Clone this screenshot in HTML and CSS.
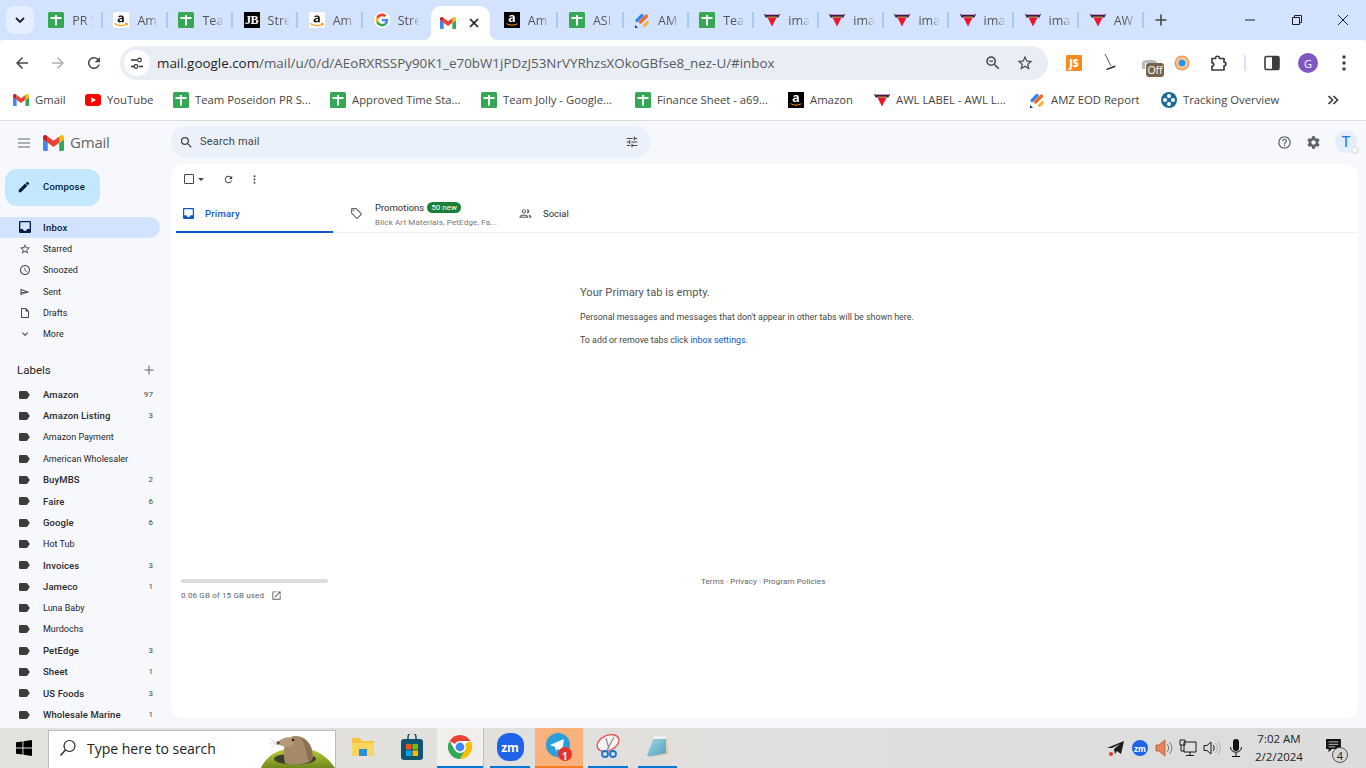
FILE: index.html
```html
<!DOCTYPE html>
<html lang="en">

<head>
    <meta charset="UTF-8">
    <meta name="viewport" content="width=device-width, initial-scale=1.0">
    <title>Inbox - Gmail</title>
    <link rel="stylesheet" href="styles.css">
</head>

<body>
    <!-- shared icons -->
    <svg class="sprite" width="0" height="0">
        <defs>
            <linearGradient id="mound" x1="0" y1="0" x2="0" y2="1">
                <stop offset="0" stop-color="#c3cc3a"/>
                <stop offset="1" stop-color="#6f8a1c"/>
            </linearGradient>
            <linearGradient id="note" x1="0" y1="0" x2="1" y2="1">
                <stop offset="0" stop-color="#a9dbe8"/>
                <stop offset="1" stop-color="#4f9fbd"/>
            </linearGradient>
        </defs>
        <symbol id="i-sheet" viewBox="0 0 16 16">
            <rect width="16" height="16" rx="1.5" fill="#34a853"/>
            <path d="M2.5 5H7V3h2v2h4.500v2H9v6.500H7V7H2.500z" fill="#fff"/>
        </symbol>
        <symbol id="i-amazon" viewBox="0 0 16 16">
            <rect width="16" height="16" rx="1.5" fill="#fff"/>
            <path d="M5.200 4.600C6 3 10.800 2.800 10.800 5.500v4.800H9.200L9 9.500c-1.300 1.400-4.400 1.200-4.400-1.100 0-2.300 2.800-2.500 4.400-2.500 0-1.600-2.200-1.500-2.800-.3zM9 7.100c-1 0-2.600.1-2.600 1.200 0 1.100 2.600 1 2.600-.3z" fill="#111"/>
            <path d="M1.500 11.500c3.500 2.700 9 2.800 12.300.5M12 11.200l2.200.4-.4 2" fill="none" stroke="#f90" stroke-width="1.100"/>
        </symbol>
        <symbol id="i-amazon-dark" viewBox="0 0 16 16">
            <rect width="16" height="16" fill="#000"/>
            <path d="M5.200 4.200C6 2.600 10.800 2.400 10.800 5.100v4.800H9.200L9 9.100c-1.300 1.400-4.400 1.200-4.400-1.100 0-2.300 2.800-2.500 4.400-2.500 0-1.600-2.200-1.500-2.800-.3zM9 6.700c-1 0-2.600.1-2.600 1.200 0 1.100 2.600 1 2.600-.3z" fill="#fff"/>
            <path d="M2.500 11.500c3 2 8 2.200 11 .2" fill="none" stroke="#f90" stroke-width="1"/>
        </symbol>
        <symbol id="i-google" viewBox="-6 -6 60 60">
            <circle cx="24" cy="24" r="30" fill="#fff"/>
            <path fill="#EA4335" d="M24 9.500c3.540 0 6.710 1.220 9.210 3.600l6.850-6.850C35.900 2.380 30.470 0 24 0 14.620 0 6.510 5.380 2.560 13.220l7.980 6.190C12.430 13.720 17.740 9.500 24 9.500z"/>
            <path fill="#4285F4" d="M46.980 24.550c0-1.570-.15-3.090-.38-4.550H24v9.020h12.940c-.58 2.960-2.260 5.480-4.780 7.180l7.730 6c4.510-4.180 7.090-10.360 7.090-17.650z"/>
            <path fill="#FBBC05" d="M10.530 28.590c-.48-1.450-.76-2.990-.76-4.590s.27-3.140.76-4.590l-7.980-6.190C.92 16.460 0 20.120 0 24c0 3.880.92 7.540 2.560 10.780l7.970-6.190z"/>
            <path fill="#34A853" d="M24 48c6.480 0 11.930-2.130 15.890-5.810l-7.730-6c-2.150 1.450-4.920 2.300-8.160 2.300-6.260 0-11.570-4.220-13.470-9.910l-7.980 6.190C6.510 42.620 14.620 48 24 48z"/>
        </symbol>
        <symbol id="i-gmail" viewBox="52 42 88 66">
            <path fill="#4285f4" d="M58 108h14V74L52 59v43c0 3.320 2.690 6 6 6"/>
            <path fill="#34a853" d="M120 108h14c3.320 0 6-2.690 6-6V59l-20 15"/>
            <path fill="#fbbc04" d="M120 48v26l20-15v-8c0-7.420-8.470-11.650-14.400-7.200"/>
            <path fill="#ea4335" d="M72 74V48l24 18 24-18v26L96 92"/>
            <path fill="#c5221f" d="M52 51v8l20 15V48l-5.600-4.200c-5.940-4.450-14.400-.22-14.400 7.200"/>
        </symbol>
        <symbol id="i-awl" viewBox="0 0 16 16">
            <path d="M0 2h16l-1.500 3.500h-13z" fill="#2b2140"/>
            <path d="M1 2.500h14" stroke="#d98fc0" stroke-width="1"/>
            <path d="M3.500 5.500h9L8 14.500z" fill="#f01428"/>
            <path d="M3 5h10" stroke="#e8b64a" stroke-width=".7"/>
        </symbol>
        <symbol id="i-amz" viewBox="0 0 16 16">
            <path d="M3 8.500 8 3.500" stroke="#2f86f0" stroke-width="3.200" stroke-linecap="round"/>
            <path d="M6.500 10 12.500 4" stroke="#f4691f" stroke-width="3.200" stroke-linecap="round"/>
            <path d="M10.500 13.500 13.500 10.500" stroke="#f9b233" stroke-width="3" stroke-linecap="round"/>
            <path d="M1 13l3 3H1z" fill="#1d2a5c"/>
        </symbol>
        <symbol id="i-label" viewBox="3 3 21 18"><path d="M17.630 5.840C17.270 5.330 16.670 5 16 5L5 5.010C3.900 5.010 3 5.900 3 7v10c0 1.100.9 1.990 2 1.990L16 19c.67 0 1.270-.33 1.630-.84L22 12l-4.370-6.160z"/></symbol>
        <symbol id="i-inbox" viewBox="3 3 18 18"><path d="M19 3H5c-1.100 0-2 .9-2 2v14c0 1.100.9 2 2 2h14c1.100 0 2-.9 2-2V5c0-1.100-.9-2-2-2zm0 12h-4c0 1.660-1.340 3-3 3s-3-1.340-3-3H5V5h14v10z"/></symbol>
    </svg>

    <div class="tabstrip">
        <button class="tab-search">
            <svg width="12" height="12" viewBox="0 0 12 12"><path d="M2 4l4 4 4-4" fill="none" stroke="#1f1f1f" stroke-width="1.800"/></svg>
        </button>
        <div class="tab"><svg class="fav"><use href="#i-sheet"/></svg><span class="tab-title">PR S</span></div>
        <div class="tab"><svg class="fav"><use href="#i-amazon"/></svg><span class="tab-title">Am</span></div>
        <div class="tab"><svg class="fav"><use href="#i-sheet"/></svg><span class="tab-title">Tea</span></div>
        <div class="tab"><span class="fav fav-jb">JB</span><span class="tab-title">Stre</span></div>
        <div class="tab"><svg class="fav"><use href="#i-amazon"/></svg><span class="tab-title">Am</span></div>
        <div class="tab no-sep"><svg class="fav"><use href="#i-google"/></svg><span class="tab-title">Stre</span></div>
        <div class="tab active">
            <svg class="fav"><use href="#i-gmail"/></svg>
            <svg class="tab-close" width="10" height="10" viewBox="0 0 10 10"><path d="M1 1l8 8M9 1l-8 8" stroke="#1f1f1f" stroke-width="1.700"/></svg>
        </div>
        <div class="tab"><svg class="fav"><use href="#i-amazon-dark"/></svg><span class="tab-title">Am</span></div>
        <div class="tab"><svg class="fav"><use href="#i-sheet"/></svg><span class="tab-title">ASI</span></div>
        <div class="tab"><svg class="fav"><use href="#i-amz"/></svg><span class="tab-title">AM</span></div>
        <div class="tab"><svg class="fav"><use href="#i-sheet"/></svg><span class="tab-title">Tea</span></div>
        <div class="tab"><svg class="fav"><use href="#i-awl"/></svg><span class="tab-title">ima</span></div>
        <div class="tab"><svg class="fav"><use href="#i-awl"/></svg><span class="tab-title">ima</span></div>
        <div class="tab"><svg class="fav"><use href="#i-awl"/></svg><span class="tab-title">ima</span></div>
        <div class="tab"><svg class="fav"><use href="#i-awl"/></svg><span class="tab-title">ima</span></div>
        <div class="tab"><svg class="fav"><use href="#i-awl"/></svg><span class="tab-title">ima</span></div>
        <div class="tab"><svg class="fav"><use href="#i-awl"/></svg><span class="tab-title">AW</span></div>
        <svg class="new-tab" width="12" height="12" viewBox="0 0 12 12"><path d="M6 .5v11M.5 6h11" stroke="#444" stroke-width="1.600"/></svg>
        <div class="window-controls">
            <span class="win-btn"><svg width="12" height="12" viewBox="0 0 12 12"><path d="M1 6h10" stroke="#1f1f1f" stroke-width="1"/></svg></span>
            <span class="win-btn"><svg width="12" height="12" viewBox="0 0 12 12"><path d="M1.500 3.500h7v7h-7zM3.500 3.500v-2h7v7h-2" fill="none" stroke="#1f1f1f" stroke-width="1"/></svg></span>
            <span class="win-btn"><svg width="12" height="12" viewBox="0 0 12 12"><path d="M1 1l10 10M11 1L1 11" stroke="#1f1f1f" stroke-width="1"/></svg></span>
        </div>
    </div>

    <div class="toolbar">
        <svg class="tool-icon" viewBox="0 0 24 24"><path d="M20 11H7.830l5.590-5.590L12 4l-8 8 8 8 1.410-1.410L7.830 13H20v-2z"/></svg>
        <svg class="tool-icon disabled" viewBox="0 0 24 24"><path d="M12 4l-1.410 1.410L16.170 11H4v2h12.170l-5.580 5.590L12 20l8-8z"/></svg>
        <svg class="tool-icon" viewBox="0 0 24 24"><path d="M17.650 6.350A7.958 7.958 0 0 0 12 4c-4.420 0-7.990 3.580-7.990 8s3.570 8 7.990 8c3.730 0 6.840-2.550 7.730-6h-2.080A5.990 5.990 0 0 1 12 18c-3.310 0-6-2.690-6-6s2.690-6 6-6c1.660 0 3.140.69 4.220 1.780L13 11h7V4l-2.350 2.350z"/></svg>
        <div class="omnibox">
            <span class="site-info">
                <svg width="14" height="14" viewBox="0 0 14 14"><path d="M1 4h6M1 10.500h3M9 10.500h4" stroke="#333" stroke-width="1.300"/><circle cx="9.500" cy="4" r="1.800" fill="none" stroke="#333" stroke-width="1.200"/><circle cx="6" cy="10.500" r="1.800" fill="none" stroke="#333" stroke-width="1.200"/></svg>
            </span>
            <span class="url"><b>mail.google.com</b>/mail/u/0/d/AEoRXRSSPy90K1_e70bW1jPDzJ53NrVYRhzsXOkoGBfse8_nez-U/#inbox</span>
            <svg class="omni-icon" viewBox="0 0 24 24"><path d="M15.500 14h-.79l-.28-.27A6.471 6.471 0 0 0 16 9.500 6.500 6.500 0 1 0 9.500 16c1.610 0 3.090-.59 4.230-1.570l.27.28v.79l5 4.990L20.490 19l-4.990-5zm-6 0C7.010 14 5 11.990 5 9.500S7.010 5 9.500 5 14 7.010 14 9.500 11.990 14 9.500 14z"/><path d="M7 8.700h5v1.600H7z"/></svg>
            <svg class="omni-icon" viewBox="0 0 24 24"><path d="M22 9.240l-7.190-.62L12 2 9.190 8.630 2 9.240l5.460 4.730L5.820 21 12 17.270 18.180 21l-1.630-7.030L22 9.240zM12 15.400l-3.760 2.270 1-4.280-3.320-2.880 4.380-.38L12 6.100l1.710 4.040 4.380.38-3.320 2.880 1 4.280L12 15.400z"/></svg>
        </div>
        <div class="extensions">
            <span class="ext ext-js">JS</span>
            <span class="ext"><svg width="20" height="20" viewBox="0 0 20 20"><path d="M5 1l6 12" stroke="#555" stroke-width="1"/><path d="M6 16l9-3.500.5 1.500-8.500 3z" fill="#222"/></svg></span>
            <span class="ext ext-off">
                <svg class="off-icon" width="16" height="12" viewBox="0 0 16 12"><path d="M0 3c2-3 13-3 15 0v1H3v6H0z" fill="#b9b9b9"/></svg>
                <span class="off-badge">Off</span>
            </span>
            <span class="ext"><svg width="18" height="18" viewBox="0 0 18 18"><circle cx="9" cy="9" r="7.500" fill="#ef9a5a"/><circle cx="9" cy="9" r="6" fill="#f6c79c"/><circle cx="9" cy="9" r="3.300" fill="#2196e8"/></svg></span>
            <span class="ext"><svg width="18" height="18" viewBox="0 0 18 18"><path d="M3 4.500h3.500c0-3 4-3 4 0H15v3.700c2.500 0 2.500 3.600 0 3.600V16H3v-4c2.200.5 2.600-3.600 0-3.200z" fill="none" stroke="#3c3c3c" stroke-width="1.700" stroke-linejoin="round"/></svg></span>
            <span class="tool-sep"></span>
            <span class="ext"><svg width="16" height="16" viewBox="0 0 16 16"><rect x="1" y="1.500" width="14" height="13" rx="1.500" fill="#fff" stroke="#3c3c3c" stroke-width="1.600"/><rect x="8" y="1.500" width="7" height="13" fill="#3c3c3c"/></svg></span>
            <span class="ext"><span class="profile">G</span></span>
            <span class="ext"><svg width="4" height="16" viewBox="0 0 4 16"><circle cx="2" cy="2" r="1.700" fill="#3c3c3c"/><circle cx="2" cy="8" r="1.700" fill="#3c3c3c"/><circle cx="2" cy="14" r="1.700" fill="#3c3c3c"/></svg></span>
        </div>
    </div>

    <div class="bookmarks">
        <a class="bm bm-1"><svg class="fav"><use href="#i-gmail"/></svg>Gmail</a>
        <a class="bm bm-2"><svg class="fav" viewBox="0 0 16 16"><rect y="2" width="16" height="12" rx="3" fill="#f00"/><path d="M6.300 5.300 11 8l-4.700 2.700z" fill="#fff"/></svg>YouTube</a>
        <a class="bm bm-3"><svg class="fav"><use href="#i-sheet"/></svg>Team Poseidon PR S...</a>
        <a class="bm bm-4"><svg class="fav"><use href="#i-sheet"/></svg>Approved Time Sta...</a>
        <a class="bm bm-5"><svg class="fav"><use href="#i-sheet"/></svg>Team Jolly - Google...</a>
        <a class="bm bm-6"><svg class="fav"><use href="#i-sheet"/></svg>Finance Sheet - a69...</a>
        <a class="bm bm-7"><svg class="fav"><use href="#i-amazon-dark"/></svg>Amazon</a>
        <a class="bm bm-8"><svg class="fav"><use href="#i-awl"/></svg>AWL LABEL - AWL L...</a>
        <a class="bm bm-9"><svg class="fav"><use href="#i-amz"/></svg>AMZ EOD Report</a>
        <a class="bm bm-10"><svg class="fav" viewBox="0 0 16 16"><circle cx="8" cy="8" r="8" fill="#1c6a96"/><circle cx="8" cy="4" r="2" fill="#fff"/><circle cx="8" cy="12" r="2" fill="#fff"/><circle cx="4" cy="8" r="2" fill="#fff"/><circle cx="12" cy="8" r="2" fill="#fff"/></svg>Tracking Overview</a>
        <svg class="bm-more" width="12" height="12" viewBox="0 0 12 12"><path d="M1.500 2l4 4-4 4M6.500 2l4 4-4 4" fill="none" stroke="#3c3c3c" stroke-width="1.700"/></svg>
    </div>

    <div class="gmail">
        <div class="gm-top">
            <div class="gm-brand">
                <svg class="burger" width="14" height="10" viewBox="0 0 14 10"><path d="M1 1h12M1 5h12M1 9h12" stroke="#5f6368" stroke-width="1.200"/></svg>
                <svg class="gm-logo"><use href="#i-gmail"/></svg>
                <span class="gm-word">Gmail</span>
            </div>
            <div class="gm-search">
                <svg class="gm-icon" viewBox="0 0 24 24"><path d="M15.500 14h-.79l-.28-.27A6.471 6.471 0 0 0 16 9.500 6.500 6.500 0 1 0 9.500 16c1.610 0 3.090-.59 4.230-1.570l.27.28v.79l5 4.990L20.490 19l-4.990-5zm-6 0C7.010 14 5 11.990 5 9.500S7.010 5 9.500 5 14 7.010 14 9.500 11.990 14 9.500 14z"/></svg>
                <span class="gm-search-text">Search mail</span>
                <svg class="gm-icon tune" viewBox="0 0 24 24"><path d="M3 17v2h6v-2H3zM3 5v2h10V5H3zm10 16v-2h8v-2h-8v-2h-2v6h2zM7 9v2H3v2h4v2h2V9H7zm14 4v-2H11v2h10zm-6-4h2V7h4V5h-4V3h-2v6z"/></svg>
            </div>
            <div class="gm-actions">
                <svg class="gm-action" viewBox="0 0 24 24"><path d="M11 18h2v-2h-2v2zm1-16C6.480 2 2 6.480 2 12s4.480 10 10 10 10-4.480 10-10S17.520 2 12 2zm0 18c-4.410 0-8-3.590-8-8s3.590-8 8-8 8 3.590 8 8-3.590 8-8 8zm0-14c-2.210 0-4 1.790-4 4h2c0-1.100.9-2 2-2s2 .9 2 2c0 2-3 1.750-3 5h2c0-2.250 3-2.500 3-5 0-2.210-1.790-4-4-4z"/></svg>
                <svg class="gm-action" viewBox="0 0 24 24"><path fill-rule="evenodd" d="M19.430 12.980c.04-.32.07-.64.07-.98 0-.34-.03-.66-.07-.98l2.110-1.650c.19-.15.24-.42.12-.64l-2-3.460c-.09-.16-.26-.25-.44-.25-.06 0-.12.01-.17.03l-2.490 1c-.52-.4-1.080-.73-1.690-.98l-.38-2.650C14.460 2.180 14.250 2 14 2h-4c-.25 0-.46.18-.49.42l-.38 2.650c-.61.25-1.170.59-1.690.98l-2.490-1c-.06-.02-.12-.03-.18-.03-.17 0-.34.09-.43.25l-2 3.460c-.13.22-.07.49.12.64l2.110 1.650c-.04.32-.07.65-.07.98 0 .33.03.66.07.98l-2.110 1.650c-.19.15-.24.42-.12.64l2 3.460c.09.16.26.25.44.25.06 0 .12-.01.17-.03l2.490-1c.52.4 1.080.73 1.690.98l.38 2.650c.03.24.24.42.49.42h4c.25 0 .46-.18.49-.42l.38-2.650c.61-.25 1.170-.59 1.690-.98l2.490 1c.06.02.12.03.18.03.17 0 .34-.09.43-.25l2-3.460c.12-.22.07-.49-.12-.64l-2.110-1.650zM12 15.500c-1.930 0-3.500-1.570-3.500-3.500s1.570-3.500 3.500-3.500 3.500 1.570 3.500 3.500-1.570 3.500-3.500 3.500z"/></svg>
                <span class="gm-avatar">T<span class="gm-key"></span></span>
            </div>
        </div>

        <div class="gm-body">
            <nav class="side">
                <button class="compose">
                    <svg class="compose-icon" viewBox="0 0 24 24"><path d="M3 17.250V21h3.750L17.810 9.940l-3.750-3.750L3 17.250zM20.710 7.040a1 1 0 0 0 0-1.410l-2.340-2.340a1 1 0 0 0-1.410 0l-1.830 1.830 3.750 3.750 1.830-1.830z"/></svg>
                    Compose
                </button>
                <a class="nav-row selected"><svg class="nav-icon dark"><use href="#i-inbox"/></svg>Inbox</a>
                <a class="nav-row"><svg class="nav-icon" viewBox="0 0 24 24"><path d="M22 9.240l-7.190-.62L12 2 9.190 8.630 2 9.240l5.460 4.730L5.820 21 12 17.270 18.180 21l-1.630-7.030L22 9.240zM12 15.400l-3.760 2.270 1-4.280-3.320-2.880 4.380-.38L12 6.100l1.710 4.040 4.380.38-3.320 2.880 1 4.280L12 15.400z"/></svg>Starred</a>
                <a class="nav-row"><svg class="nav-icon" viewBox="0 0 24 24"><path d="M11.990 2C6.470 2 2 6.480 2 12s4.470 10 9.990 10C17.520 22 22 17.520 22 12S17.520 2 11.990 2zM12 20c-4.420 0-8-3.580-8-8s3.580-8 8-8 8 3.580 8 8-3.580 8-8 8zm.5-13H11v6l5.250 3.150.75-1.230-4.500-2.670z"/></svg>Snoozed</a>
                <a class="nav-row"><svg class="nav-icon" viewBox="0 0 24 24"><path d="M3 5.500v13L21 12zm2 3l10 3.500H5zm0 7V14h10z" fill-rule="evenodd"/></svg>Sent</a>
                <a class="nav-row"><svg class="nav-icon" viewBox="0 0 24 24"><path d="M14 2H6c-1.100 0-2 .9-2 2v16c0 1.100.9 2 2 2h12c1.100 0 2-.9 2-2V8l-6-6zm4 18H6V4h7v5h5v11z"/></svg>Drafts</a>
                <a class="nav-row"><svg class="nav-icon" viewBox="0 0 24 24"><path d="M7.400 8.600 12 13.200l4.600-4.600L18 10l-6 6-6-6z"/></svg>More</a>

                <div class="labels-head">Labels<svg width="10" height="10" viewBox="0 0 10 10"><path d="M5 .5v9M.5 5h9" stroke="#5f6368" stroke-width="1"/></svg></div>

                <a class="nav-row unread"><svg class="nav-icon label"><use href="#i-label"/></svg>Amazon<span class="count">97</span></a>
                <a class="nav-row unread"><svg class="nav-icon label"><use href="#i-label"/></svg>Amazon Listing<span class="count">3</span></a>
                <a class="nav-row"><svg class="nav-icon label"><use href="#i-label"/></svg>Amazon Payment</a>
                <a class="nav-row"><svg class="nav-icon label"><use href="#i-label"/></svg>American Wholesaler</a>
                <a class="nav-row unread"><svg class="nav-icon label"><use href="#i-label"/></svg>BuyMBS<span class="count">2</span></a>
                <a class="nav-row unread"><svg class="nav-icon label"><use href="#i-label"/></svg>Faire<span class="count">6</span></a>
                <a class="nav-row unread"><svg class="nav-icon label"><use href="#i-label"/></svg>Google<span class="count">6</span></a>
                <a class="nav-row"><svg class="nav-icon label"><use href="#i-label"/></svg>Hot Tub</a>
                <a class="nav-row unread"><svg class="nav-icon label"><use href="#i-label"/></svg>Invoices<span class="count">3</span></a>
                <a class="nav-row unread"><svg class="nav-icon label"><use href="#i-label"/></svg>Jameco<span class="count">1</span></a>
                <a class="nav-row"><svg class="nav-icon label"><use href="#i-label"/></svg>Luna Baby</a>
                <a class="nav-row"><svg class="nav-icon label"><use href="#i-label"/></svg>Murdochs</a>
                <a class="nav-row unread"><svg class="nav-icon label"><use href="#i-label"/></svg>PetEdge<span class="count">3</span></a>
                <a class="nav-row unread"><svg class="nav-icon label"><use href="#i-label"/></svg>Sheet<span class="count">1</span></a>
                <a class="nav-row unread"><svg class="nav-icon label"><use href="#i-label"/></svg>US Foods<span class="count">3</span></a>
                <a class="nav-row unread"><svg class="nav-icon label"><use href="#i-label"/></svg>Wholesale Marine<span class="count">1</span></a>
            </nav>

            <main class="card">
                <div class="card-tools">
                    <span class="check"></span>
                    <span class="caret"></span>
                    <svg class="card-tool refresh" viewBox="0 0 24 24"><path d="M17.650 6.350A7.958 7.958 0 0 0 12 4c-4.420 0-7.990 3.580-7.990 8s3.570 8 7.990 8c3.730 0 6.840-2.550 7.730-6h-2.080A5.990 5.990 0 0 1 12 18c-3.310 0-6-2.690-6-6s2.690-6 6-6c1.660 0 3.140.69 4.220 1.780L13 11h7V4l-2.350 2.350z"/></svg>
                    <svg class="card-tool dots" viewBox="0 0 24 24"><circle cx="12" cy="5" r="2.200"/><circle cx="12" cy="12" r="2.200"/><circle cx="12" cy="19" r="2.200"/></svg>
                </div>
                <div class="mail-tabs">
                    <div class="mail-tab primary">
                        <svg class="mail-tab-icon"><use href="#i-inbox"/></svg>
                        <span>Primary</span>
                    </div>
                    <div class="mail-tab promo">
                        <svg class="mail-tab-icon grey" viewBox="0 0 24 24"><path d="M21.410 11.580l-9-9C12.050 2.220 11.550 2 11 2H4c-1.100 0-2 .9-2 2v7c0 .55.22 1.050.59 1.420l9 9c.36.36.86.58 1.410.58s1.050-.22 1.410-.59l7-7c.37-.36.59-.86.59-1.410s-.23-1.060-.59-1.420zM13 20l-9-9V4h7l9 9-7 7z"/><circle cx="6.500" cy="6.500" r="1.500"/></svg>
                        <div class="promo-text">
                            <div class="promo-title">Promotions<span class="promo-badge">50 new</span></div>
                            <div class="promo-sub">Blick Art Materials, PetEdge, Fa...</div>
                        </div>
                    </div>
                    <div class="mail-tab social">
                        <svg class="mail-tab-icon grey" viewBox="0 0 24 24"><path d="M9 12c2.210 0 4-1.790 4-4s-1.790-4-4-4-4 1.790-4 4 1.790 4 4 4zm0-6c1.100 0 2 .9 2 2s-.9 2-2 2-2-.9-2-2 .9-2 2-2zm0 8c-2.670 0-8 1.340-8 4v2h16v-2c0-2.660-5.330-4-8-4zm-6 4c.22-.72 3.310-2 6-2 2.700 0 5.800 1.290 6 2H3zM15.500 12c1.900 0 3.500-1.600 3.500-4s-1.600-4-3.500-4c-.5 0-.9.1-1.300.3.8 1 1.300 2.300 1.300 3.700s-.5 2.700-1.300 3.700c.4.200.8.300 1.300.3zm1.500 2.300c1.200.9 2 2 2 3.700v2h4v-2c0-2.300-3.500-3.400-6-3.700z"/></svg>
                        <span>Social</span>
                    </div>
                </div>

                <div class="empty">
                    <h2>Your Primary tab is empty.</h2>
                    <p>Personal messages and messages that don't appear in other tabs will be shown here.</p>
                    <p>To add or remove tabs click <a>inbox settings</a>.</p>
                </div>

                <div class="card-foot">
                    <div class="storage">
                        <div class="storage-bar"></div>
                        <div class="storage-text">0.06 GB of 15 GB used
                            <svg width="11" height="11" viewBox="0 0 24 24"><path d="M19 19H5V5h7V3H3v18h18v-9h-2zM14 3v2h3.590l-9.830 9.830 1.410 1.410L19 6.410V10h2V3z" fill="#5f6368"/></svg>
                        </div>
                    </div>
                    <div class="foot-links">Terms · Privacy · Program Policies</div>
                </div>
            </main>
        </div>
    </div>

    <footer class="taskbar">
        <span class="start">
            <svg width="16" height="16" viewBox="0 0 16 16"><path d="M0 2.300 6.500 1.400v6.200H0zM7.400 1.300 16 0v7.600H7.400zM0 8.400h6.500v6.200L0 13.700zM7.400 8.400H16V16l-8.600-1.200z" fill="#000"/></svg>
        </span>
        <div class="win-search">
            <svg width="18" height="18" viewBox="0 0 18 18"><circle cx="10.500" cy="7" r="5.500" fill="none" stroke="#222" stroke-width="1.200"/><path d="M6.500 11 1.500 16.500" stroke="#222" stroke-width="1.300"/></svg>
            <span>Type here to search</span>
            <svg class="doodle" width="74" height="38" viewBox="0 0 74 38">
                <path d="M0 38C6 25 18 18 37 18c18 0 29 8 37 20z" fill="url(#mound)"/>
                <ellipse cx="34" cy="29" rx="21" ry="5.500" fill="#39402a"/>
                <path d="M24 33C21 22 23 8 33 6c9-1 16 5 18 14 1 6 2 10-3 12-7 3-20 4-24 1z" fill="#a58a6a"/>
                <path d="M40 8c6 2 10 7 11 13 1 5 1 8-3 11-3-7-3-17-8-24z" fill="#8a7052"/>
                <path d="M16 13c3-4 10-7 16-5l1 7c-5 3-13 2-17-2z" fill="#b49a7c"/>
                <circle cx="17" cy="13" r="1.800" fill="#6a4a3a"/>
                <circle cx="32" cy="10" r="1.300" fill="#2a2018"/>
                <path d="M9 9l7 4M8 13h8M10 17l6-3" stroke="#cfcfcf" stroke-width=".7"/>
            </svg>
        </div>
        <div class="task-apps">
            <span class="app">
                <svg width="24" height="22" viewBox="0 0 24 22"><path d="M1 2h8l2 3h12v15H1z" fill="#f7c53d"/><path d="M1 7h22v13H1z" fill="#fbd65f"/><path d="M8 20v-7h8v7z" fill="#2a8fd8"/></svg>
            </span>
            <span class="app">
                <svg width="24" height="26" viewBox="0 0 24 26"><path d="M8 6V3a4 4 0 0 1 8 0v3" fill="none" stroke="#11526e" stroke-width="1.500"/><rect x="1" y="5" width="22" height="21" rx="3" fill="#11526e"/><rect x="6" y="10" width="5.500" height="5.500" fill="#f25022"/><rect x="12.500" y="10" width="5.500" height="5.500" fill="#7fba00"/><rect x="6" y="16.500" width="5.500" height="5.500" fill="#00a4ef"/><rect x="12.500" y="16.500" width="5.500" height="5.500" fill="#ffb900"/></svg>
            </span>
            <span class="app app-open app-chrome">
                <svg width="24" height="24" viewBox="-6 -6 60 60"><circle cx="24" cy="24" r="30" fill="#fff"/><path d="M24 -6a30 30 0 0 1 26 15H24a15 15 0 0 0-13 7.500L-2 9A30 30 0 0 1 24-6z" fill="#ea4335"/><path d="M50 9a30 30 0 0 1-26 45l13-22.500A15 15 0 0 0 37 16.500z" fill="#fbbc04"/><path d="M24 54A30 30 0 0 1-2 9l13 22.500A15 15 0 0 0 37 31.500z" fill="#34a853"/><circle cx="24" cy="24" r="11" fill="#4285f4"/></svg>
            </span>
            <span class="app-sep"></span>
            <span class="app app-open app-zoom"><span class="zm">zm</span></span>
            <span class="app app-open app-tg">
                <svg width="28" height="28" viewBox="0 0 28 28"><circle cx="13" cy="12" r="12" fill="#2a9fd9"/><path d="M5 12l14-6-2 13-4-3-2 2-1-4z" fill="#fff"/><circle cx="20" cy="21" r="7" fill="#e5322d"/></svg>
                <span class="tg-num">1</span>
            </span>
            <span class="app app-open app-snip">
                <svg width="26" height="26" viewBox="0 0 26 26"><ellipse cx="13" cy="9" rx="11.500" ry="7.500" transform="rotate(-25 13 9)" fill="#f4f4f4" stroke="#e25555" stroke-width="1.300"/><path d="M11 4l3 11M19 3l-7 13" stroke="#8c8c8c" stroke-width="1.200"/><circle cx="10" cy="20" r="3" fill="none" stroke="#1c75cf" stroke-width="1.800"/><circle cx="18" cy="20" r="3" fill="none" stroke="#1c75cf" stroke-width="1.800"/></svg>
            </span>
            <span class="app app-open app-note">
                <svg width="24" height="24" viewBox="0 0 24 24"><path d="M10 1h10l3 18-17 3z" fill="#d9cfa8"/><path d="M8 2h12l0 16-16 3.500c-1.500-.3-3-.5-3-1z" fill="url(#note)"/><path d="M8 1h12v3H6.500z" fill="#eef0ee"/></svg>
            </span>
        </div>
        <div class="tray">
            <span class="tray-slot"><svg width="18" height="16" viewBox="0 0 18 16"><path d="M0 8 17 1l-3 13-4-3-2 3-1-5 6-5-8 4z" fill="#1a1a1a"/><circle cx="4" cy="14" r="2" fill="#e5322d"/></svg></span>
            <span class="tray-slot"><span class="tray-zm">zm</span></span>
            <span class="tray-slot"><svg width="18" height="18" viewBox="0 0 18 18"><path d="M1 6h3l6-5v16l-6-5H1z" fill="#e8825a" stroke="#a0522d" stroke-width=".7"/><path d="M12 5c2 2 2 6 0 8M14.500 3c3 3 3 9 0 12" fill="none" stroke="#777" stroke-width="1"/></svg></span>
            <span class="tray-slot"><svg width="18" height="18" viewBox="0 0 18 18"><path d="M5 3h12v10H5zM1 1h5v5H1zM11 13v3M7 16.500h8M2 6v6h3" fill="none" stroke="#1a1a1a" stroke-width="1"/></svg></span>
            <span class="tray-slot"><svg width="18" height="16" viewBox="0 0 18 16"><path d="M1 5.500h3L8 2v12l-4-3.500H1z" fill="none" stroke="#1a1a1a" stroke-width="1"/><path d="M10 5c1.500 1.700 1.500 4.300 0 6" fill="none" stroke="#1a1a1a" stroke-width="1"/><path d="M12.500 3.500c2.500 2.500 2.500 6.500 0 9M15 2c3 3 3 9 0 12" fill="none" stroke="#aaa" stroke-width="1"/></svg></span>
            <span class="tray-slot"><svg width="14" height="18" viewBox="0 0 14 18"><rect x="4" y="0" width="6" height="12" rx="3" fill="#111"/><path d="M1.500 8c0 7 11 7 11 0M7 14v3M3 17.500h8" fill="none" stroke="#111" stroke-width="1"/></svg></span>
            <div class="clock"><span>7:02 AM</span><span>2/2/2024</span></div>
            <span class="notif">
                <svg width="17" height="14" viewBox="0 0 20 17"><path d="M1 0h18v12H8l-4 4v-4H1z" fill="#111"/><path d="M4 3.500h12M4 6.500h12M4 9.500h8" stroke="#e0e0e0" stroke-width="1"/></svg>
                <span class="notif-num">4</span>
            </span>
        </div>
    </footer>
</body>

</html>
```

FILE: styles.css
```css
:root {
    --tab-bg: #d3e3fd;
    --tab-sep: #a8c7fa;
    --gm-bg: #f6f8fc;
    --gm-text: #1f1f1f;
    --gm-grey: #5f6368;
    --blue: #0b57d0;
}

* {
    margin: 0;
    padding: 0;
    box-sizing: border-box;
}

html, body {
    height: 100%;
    overflow: hidden;
}

body {
    display: flex;
    flex-direction: column;
    font-family: "Open Sans", sans-serif;
    background-color: var(--gm-bg);
}

.sprite {
    position: absolute;
}

.fav {
    width: 16px;
    height: 16px;
    flex: none;
}

/* tab strip */
.tabstrip {
    height: 40px;
    flex: none;
    display: flex;
    align-items: center;
    padding-left: 6px;
    background-color: var(--tab-bg);
}

.tab-search {
    width: 28px;
    height: 28px;
    margin-right: 3.8px;
    flex: none;
    display: flex;
    align-items: center;
    justify-content: center;
    border: none;
    border-radius: 8px;
    background-color: #e4eefe;
}

.tab {
    position: relative;
    width: 65.1px;
    height: 40px;
    flex: none;
    display: flex;
    align-items: center;
    gap: 8px;
    padding-left: 10.5px;
    font-size: 12.5px;
    color: #555;
}

.tab::after {
    content: "";
    position: absolute;
    right: 0;
    top: 12px;
    width: 2px;
    height: 16px;
    background-color: var(--tab-sep);
}

.tab.no-sep::after {
    display: none;
}

/* long titles fade out instead of being clipped */
.tab-title {
    white-space: nowrap;
    -webkit-mask-image: linear-gradient(to right, #000 12px, transparent 22px);
    mask-image: linear-gradient(to right, #000 12px, transparent 22px);
}

.fav-jb {
    display: flex;
    align-items: center;
    justify-content: center;
    background-color: #000;
    color: #fff;
    font-family: "Liberation Serif", serif;
    font-size: 12px;
    font-weight: 700;
    letter-spacing: -.5px;
}

.tab.active {
    height: 34px;
    width: 59px;
    margin: 6px 3px 0;
    padding-left: 9px;
    border-radius: 10px 10px 0 0;
    background-color: #fff;
}

/* the concave corners where the active tab meets the toolbar */
.tab.active::before,
.tab.active::after {
    content: "";
    position: absolute;
    top: auto;
    bottom: 0;
    width: 8px;
    height: 8px;
}

.tab.active::before {
    left: -8px;
    background: radial-gradient(circle at 0 0, transparent 8px, #fff 8.5px);
}

.tab.active::after {
    right: -8px;
    background: radial-gradient(circle at 100% 0, transparent 8px, #fff 8.5px);
}

.tab-close {
    margin-left: auto;
    margin-right: 11px;
}

.new-tab {
    margin-left: 11px;
    flex: none;
}

.window-controls {
    margin-left: auto;
    display: flex;
}

.win-btn {
    width: 46.3px;
    height: 40px;
    display: flex;
    align-items: center;
    justify-content: center;
}

/* address bar */
.toolbar {
    height: 40px;
    flex: none;
    display: flex;
    align-items: flex-end;
    padding-left: 4px;
    background-color: #fff;
    border-radius: 8px 8px 0 0;
}

.tool-icon {
    width: 18px;
    height: 18px;
    flex: none;
    margin: 0 9px 8px;
    fill: #474747;
}

.tool-icon.disabled {
    fill: #b0b0b0;
}

.omnibox {
    width: 928px;
    height: 34px;
    flex: none;
    margin-left: 8px;
    display: flex;
    align-items: center;
    border-radius: 17px;
    background-color: #e9eef6;
}

.site-info {
    width: 26px;
    height: 26px;
    margin: 0 7px 0 4px;
    display: flex;
    align-items: center;
    justify-content: center;
    border-radius: 50%;
    background-color: #fff;
}

.url {
    flex: 1;
    font-size: 13.4px;
    color: #5a5a5a;
    white-space: nowrap;
}

.url b {
    font-weight: 400;
    color: #1f1f1f;
}

.omni-icon {
    width: 18px;
    height: 18px;
    fill: #474747;
    flex: none;
    margin-right: 14px;
}

.extensions {
    flex: 1;
    height: 34px;
    display: flex;
    align-items: center;
    padding-left: 8px;
}

.ext {
    position: relative;
    width: 36px;
    height: 34px;
    flex: none;
    display: flex;
    align-items: center;
    justify-content: center;
}

.ext-js {
    width: 16px;
    height: 16px;
    margin: 9px 10px;
    border-radius: 1px;
    background-color: #f58a1f;
    color: #fff;
    font-size: 10px;
    font-weight: 800;
}

.off-icon {
    position: absolute;
    left: 14px;
    top: 13px;
}

.off-badge {
    position: absolute;
    left: 18px;
    bottom: 3px;
    width: 18px;
    text-align: center;
    border-radius: 3px;
    background-color: #7a6449;
    color: #fff;
    font-size: 10.5px;
    line-height: 14px;
}

.tool-sep {
    width: 2px;
    height: 16px;
    margin: 0 8px;
    background-color: #d3e3fd;
}

.profile {
    width: 20px;
    height: 20px;
    display: flex;
    align-items: center;
    justify-content: center;
    border-radius: 50%;
    background-color: #7e57c2;
    color: #fff;
    font-size: 11px;
}

/* bookmarks */
.bookmarks {
    height: 41px;
    flex: none;
    display: flex;
    align-items: center;
    padding: 0 0 1px 13px;
    background-color: #fff;
    border-bottom: 1px solid #dcdcdc;
}

.bm {
    display: flex;
    align-items: center;
    gap: 6px;
    flex: none;
    font-size: 11.3px;
    color: #444;
    white-space: nowrap;
}

.bm-1 { width: 72px; }
.bm-2 { width: 88px; }
.bm-3 { width: 157px; }
.bm-4 { width: 151px; }
.bm-5 { width: 154px; }
.bm-6 { width: 153px; }
.bm-7 { width: 86px; }
.bm-8 { width: 155px; }
.bm-9 { width: 132px; }
.bm-10 { width: 166px; }

.bm-more {
    flex: none;
}

/* gmail */
.gmail {
    flex: 1;
    min-height: 0;
    display: flex;
    flex-direction: column;
    background-color: var(--gm-bg);
}

.gm-top {
    height: 43px;
    flex: none;
    display: flex;
    align-items: center;
    padding-bottom: 1px;
}

.gm-brand {
    width: 171px;
    flex: none;
    display: flex;
    align-items: center;
    padding: 1px 0 0 17px;
}

.gm-logo {
    width: 21px;
    height: 16px;
    margin-left: 12px;
}

.gm-word {
    margin: 0 0 2px 6px;
    font-size: 15px;
    letter-spacing: -.2px;
    color: var(--gm-grey);
}

.gm-search {
    width: 480px;
    height: 32px;
    flex: none;
    display: flex;
    align-items: center;
    padding: 0 12px 0 8px;
    border-radius: 16px;
    background-color: #eaf1fb;
    font-family: Roboto, sans-serif;
}

.gm-icon {
    width: 15px;
    height: 15px;
    fill: #444746;
    flex: none;
}

.gm-search-text {
    flex: 1;
    margin: 0 0 2px 6px;
    font-size: 11px;
    letter-spacing: .2px;
    color: #444746;
}

.tune {
    width: 14px;
    height: 14px;
}

.gm-actions {
    margin-left: auto;
    display: flex;
    align-items: center;
    gap: 14px;
    padding-right: 9px;
}

.gm-action {
    width: 15px;
    height: 15px;
    fill: #5f6368;
}

.gm-avatar {
    position: relative;
    width: 22px;
    height: 22px;
    display: flex;
    align-items: center;
    justify-content: center;
    border-radius: 50%;
    background-color: #e3edfb;
    color: #1a73e8;
    font-size: 15px;
    font-family: Roboto, sans-serif;
}

.gm-key {
    position: absolute;
    right: -2px;
    bottom: -1px;
    width: 8px;
    height: 8px;
    border-radius: 50%;
    background-color: #fff;
    border: 2px solid #e6e6e6;
}

.gm-body {
    flex: 1;
    min-height: 0;
    display: flex;
    font-family: Roboto, sans-serif;
}

.side {
    width: 171px;
    flex: none;
    overflow: hidden;
    padding-top: 5px;
}

.compose {
    width: 95px;
    height: 37px;
    margin: 0 0 11px 5px;
    display: flex;
    align-items: center;
    gap: 12px;
    padding: 0 0 2px 12px;
    border: none;
    border-radius: 12px;
    background-color: #c2e7ff;
    font-family: Roboto, sans-serif;
    font-size: 9.5px;
    font-weight: 500;
    letter-spacing: .2px;
    color: #001d35;
}

.compose-icon {
    width: 14px;
    height: 14px;
    fill: #001d35;
    flex: none;
}

.nav-row {
    width: 160px;
    height: 21.33px;
    display: flex;
    align-items: center;
    padding: 0 7px 0 19px;
    border-radius: 0 11px 11px 0;
    font-size: 9px;
    color: var(--gm-text);
    white-space: nowrap;
}

.nav-row.unread {
    font-size: 9.5px;
    font-weight: 500;
    letter-spacing: .1px;
    color: #2a2a2a;
}

.nav-row.selected {
    padding-bottom: 1px;
    background-color: #d3e3fd;
    color: #001d35;
    font-size: 9.5px;
    font-weight: 500;
    letter-spacing: .2px;
}

.nav-icon {
    width: 12px;
    height: 12px;
    flex: none;
    margin-right: 12px;
    fill: #444746;
}

.nav-icon.dark {
    fill: #041e49;
}

.nav-icon.label {
    fill: #3c3c3c;
}

.count {
    margin-left: auto;
    font-size: 8px;
    font-weight: 400;
    color: #444746;
}

.labels-head {
    width: 160px;
    height: 26px;
    margin: 12px 0 1px;
    display: flex;
    align-items: center;
    justify-content: space-between;
    padding: 0 6px 0 17px;
    font-size: 11.5px;
    color: #1f1f1f;
}

.card {
    width: 1187px;
    height: 554px;
    flex: none;
    display: flex;
    flex-direction: column;
    border-radius: 12px;
    background-color: #fff;
}

.card-tools {
    height: 29px;
    flex: none;
    display: flex;
    align-items: center;
    padding: 1px 0 0 13px;
}

.check {
    width: 10px;
    height: 10px;
    border: 1px solid #444746;
    border-radius: 1px;
}

.caret {
    margin-left: 4px;
    border-top: 3px solid #444746;
    border-left: 3px solid transparent;
    border-right: 3px solid transparent;
}

.card-tool {
    width: 11px;
    height: 11px;
    fill: #444746;
}

.refresh {
    margin-left: 19px;
}

.dots {
    margin-left: 15px;
}

.mail-tabs {
    height: 40px;
    flex: none;
    display: flex;
    margin-left: 5px;
    margin-right: 1px;
    border-bottom: 1px solid #eef0f1;
}

.mail-tab {
    height: 40px;
    display: flex;
    align-items: center;
    flex: none;
    font-size: 9.5px;
    color: #444746;
}

.primary {
    width: 157px;
    padding: 2px 0 0 7px;
    gap: 11px;
    color: var(--blue);
    font-weight: 500;
    letter-spacing: .2px;
    border-bottom: 2px solid var(--blue);
}

.mail-tab-icon {
    width: 11px;
    height: 11px;
    fill: var(--blue);
    flex: none;
}

.mail-tab-icon.grey {
    width: 13px;
    height: 13px;
    fill: #5f6368;
}

.promo {
    width: 186px;
    padding-left: 17px;
    gap: 12px;
}

.promo-text {
    padding-top: 2px;
}

.promo-title {
    display: flex;
    align-items: center;
    gap: 3px;
    color: #303030;
}

.promo-badge {
    height: 11px;
    padding: 0 4px;
    display: inline-flex;
    align-items: center;
    border-radius: 6px;
    background-color: #188038;
    color: #fff;
    font-size: 8px;
}

.promo-sub {
    margin-top: 5px;
    font-size: 8px;
    letter-spacing: .15px;
    color: #747775;
    white-space: nowrap;
}

.social {
    gap: 11px;
    color: #303030;
}

.empty {
    height: 346px;
    flex: none;
    padding: 52px 0 0 409px;
    color: #444746;
}

.empty h2 {
    margin-bottom: -1px;
    font-size: 11.15px;
    font-weight: 400;
    line-height: 16px;
    color: #555;
}

.empty p {
    margin-top: 11px;
    font-size: 8.86px;
    line-height: 12px;
}

.empty a {
    color: var(--blue);
}

.card-foot {
    display: flex;
    align-items: flex-start;
    padding-left: 10px;
    color: #5f6368;
    font-size: 8px;
}

.storage {
    width: 147px;
    flex: none;
}

.storage-bar {
    height: 4px;
    border-radius: 2px;
    background-color: #dadce0;
}

.storage-text {
    margin-top: 7px;
    display: flex;
    align-items: center;
    gap: 7px;
    letter-spacing: .15px;
    white-space: nowrap;
}

.foot-links {
    margin: -2px 0 0 373px;
    line-height: 9px;
    letter-spacing: .1px;
}

/* windows taskbar */
.taskbar {
    height: 40px;
    flex: none;
    display: flex;
    background: linear-gradient(to right, #e4e2dd, #dcdcdc);
    font-family: "Open Sans", sans-serif;
}

.start {
    width: 48px;
    flex: none;
    display: flex;
    align-items: center;
    justify-content: center;
}

.win-search {
    position: relative;
    width: 288px;
    flex: none;
    display: flex;
    align-items: center;
    gap: 10px;
    padding: 0 0 3px 10px;
    margin-top: 2px;
    background-color: #fff;
    border: 1px solid #bdbdbd;
    border-bottom: none;
    font-size: 14px;
    color: #222;
}

.doodle {
    position: absolute;
    right: 0;
    bottom: 0;
}

.task-apps {
    display: flex;
    padding-left: 2px;
}

.app {
    position: relative;
    width: 49px;
    flex: none;
    display: flex;
    align-items: center;
    justify-content: center;
    border-bottom: 2px solid transparent;
}

.app-open {
    border-bottom-color: #0078d4;
}

.app-chrome {
    width: 46px;
    margin-left: 1px;
    background-color: #f0efec;
}

.app-sep {
    width: 1px;
    background-color: #bdbdbd;
}

.app-zoom {
    width: 40px;
    margin-left: 6px;
}

.zm {
    width: 27px;
    height: 28px;
    display: flex;
    align-items: center;
    justify-content: center;
    border-radius: 12px;
    background-color: #1f63e8;
    color: #fff;
    font-size: 12px;
    font-weight: 700;
}

.app-tg {
    width: 48px;
    margin-left: 5px;
    background-color: #f9b27c;
    border-bottom-color: #f57c1f;
}

.tg-num {
    position: absolute;
    left: 27px;
    top: 21px;
    color: #fff;
    font-size: 10px;
    font-weight: 700;
}

.app-snip {
    width: 40px;
    margin-left: 5px;
}

.app-note {
    width: 39px;
    margin-left: 10px;
}

.tray {
    margin-left: auto;
    display: flex;
    align-items: center;
}

.tray-slot {
    width: 24px;
    flex: none;
    display: flex;
    align-items: center;
    justify-content: center;
}

.tray-zm {
    width: 16px;
    height: 16px;
    display: flex;
    align-items: center;
    justify-content: center;
    border-radius: 50%;
    background-color: #1f63e8;
    color: #fff;
    font-size: 8px;
    font-weight: 700;
}

.clock {
    width: 62px;
    display: flex;
    flex-direction: column;
    align-items: center;
    gap: 2px;
    font-size: 11.5px;
    line-height: 16px;
    color: #222;
}

.notif {
    position: relative;
    width: 56px;
    height: 40px;
    display: flex;
    align-items: center;
    padding: 0 0 4px 15px;
}

.notif-num {
    position: absolute;
    left: 22px;
    top: 19px;
    width: 16px;
    height: 16px;
    display: flex;
    align-items: center;
    justify-content: center;
    border-radius: 50%;
    border: 1px solid #555;
    background-color: #d8d8d8;
    font-size: 11px;
    color: #222;
}
```
